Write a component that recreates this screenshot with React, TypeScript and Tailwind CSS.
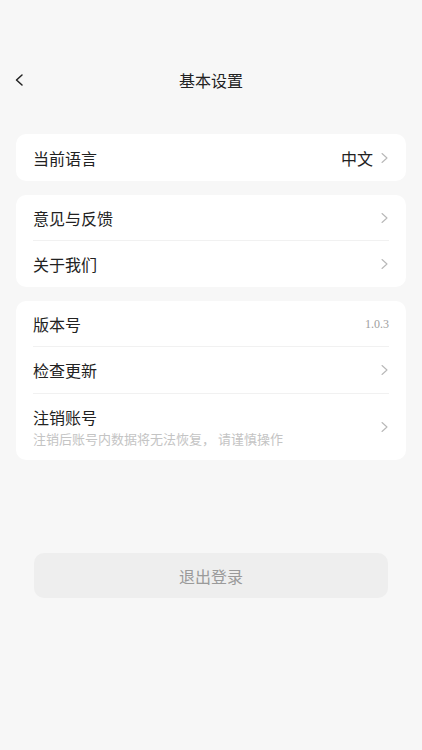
import React from "react";

const Chevron = () => (
  <svg width="9" height="14" viewBox="0 0 9 14" fill="none" className="shrink-0">
    <path d="M2 2.5L7 7L2 11.5" stroke="#b8b8b8" strokeWidth="1.1" strokeLinecap="round" strokeLinejoin="round" />
  </svg>
);

const Row = ({ label, right, last, h = "h-[46px]" }: { label: string; right?: React.ReactNode; last?: boolean; h?: string }) => (
  <div className={`flex items-center justify-between ${h} ${last ? "" : "border-b border-[#f1f1f1]"}`}>
    <span className="text-[16px] text-[#222]">{label}</span>
    {right ?? <Chevron />}
  </div>
);

const App = () => {
  return (
    <div
      className="w-[422px] h-[750px] bg-[#f7f7f7] flex flex-col"
      style={{ fontFamily: '"Noto Sans CJK SC", "Noto Sans", sans-serif' }}
    >
      <div className="relative h-[58px] mt-[51px] flex items-center justify-center">
        <svg width="10" height="14" viewBox="0 0 10 14" fill="none" className="absolute left-[14px] top-[22px]">
          <path d="M8 2L2.5 7L8 12" stroke="#222" strokeWidth="1.5" strokeLinecap="round" strokeLinejoin="round" />
        </svg>
        <span className="text-[16px] text-[#222]">基本设置</span>
      </div>

      <div className="px-4 mt-[25px] flex flex-col gap-[14px]">
        <div className="bg-white rounded-[10px] px-[17px]">
          <Row
            label="当前语言"
            last
            h="h-[47px]"
            right={
              <div className="flex items-center gap-[7px]">
                <span className="text-[16px] text-[#222]">中文</span>
                <Chevron />
              </div>
            }
          />
        </div>

        <div className="bg-white rounded-[10px] px-[17px]">
          <Row label="意见与反馈" />
          <Row label="关于我们" last />
        </div>

        <div className="bg-white rounded-[10px] px-[17px]">
          <Row
            label="版本号"
            right={
              <span className="text-[12px] text-[#a0a0a0]" style={{ fontFamily: '"Liberation Serif", serif' }}>
                1.0.3
              </span>
            }
          />
          <Row label="检查更新" h="h-[47px]" />
          <div className="flex items-center justify-between h-[66px]">
            <div className="flex flex-col">
              <span className="text-[16px] text-[#222] leading-[20px]">注销账号</span>
              <span className="text-[13px] text-[#c4c4c4] leading-[18px] mt-[3px]">
                注销后账号内数据将无法恢复， 请谨慎操作
              </span>
            </div>
            <Chevron />
          </div>
        </div>
      </div>

      <div className="px-[34px] mt-[93px]">
        <div className="h-[45px] rounded-[10px] bg-[#eeeeee] flex items-center justify-center">
          <span className="text-[16px] text-[#9a9a9a]">退出登录</span>
        </div>
      </div>
    </div>
  );
};

export default App;
